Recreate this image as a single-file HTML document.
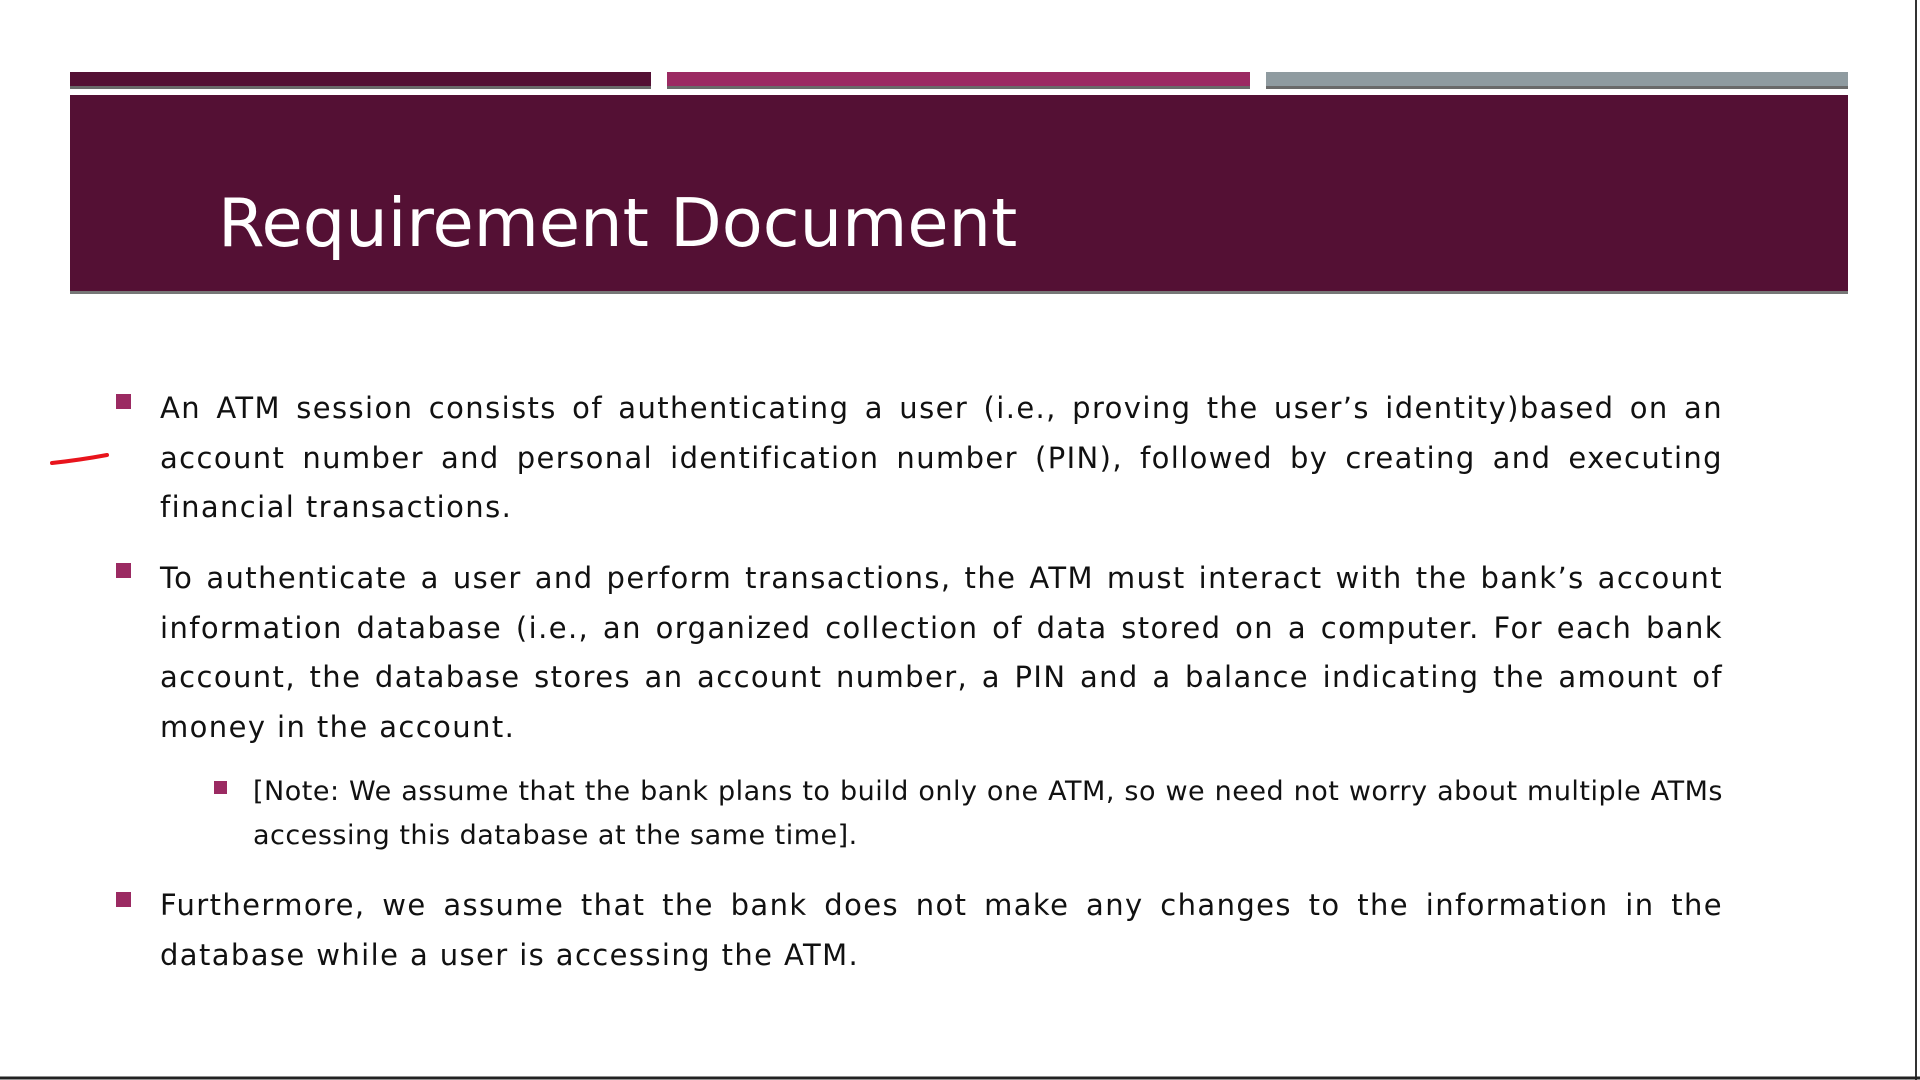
<!DOCTYPE html>
<html><head><meta charset="utf-8"><style>
html,body{margin:0;padding:0;width:1920px;height:1080px;background:#fff;overflow:hidden;position:relative;font-family:"DejaVu Sans","Liberation Sans",sans-serif;}
.bar{position:absolute;top:72px;height:14px;box-shadow:0 3px 0 #6a6a6a;}
.banner{position:absolute;left:70px;top:95px;width:1778px;height:196px;background:#541034;box-shadow:0 3px 0 #777;}
.title{position:absolute;left:218px;top:178px;color:#fff;font-size:67px;line-height:90px;white-space:nowrap;}
.p{position:absolute;left:160px;width:1563px;font-size:29px;line-height:49.6px;color:#111;letter-spacing:1.4px;}
.p div,.sub div{white-space:nowrap;text-align:justify;text-align-last:justify;}
.p div.l,.sub div.l{text-align-last:left;}
.sub{position:absolute;left:253px;width:1470px;font-size:27px;line-height:44px;color:#111;letter-spacing:0.5px;}
.b{position:absolute;width:15px;height:15px;background:#9b2a62;}
.bs{position:absolute;width:13px;height:13px;background:#9b2a62;}
</style></head><body>
<div class="bar" style="left:70px;width:581px;background:#541034"></div>
<div class="bar" style="left:667px;width:583px;background:#9b2a62"></div>
<div class="bar" style="left:1266px;width:582px;background:#8f9ba0"></div>
<div class="banner"></div>
<div class="title">Requirement Document</div>

<div class="b" style="left:116px;top:394px"></div>
<div class="p" style="top:384px"><div>An ATM session consists of authenticating a user (i.e., proving the user’s identity)based on an</div><div>account number and personal identification number (PIN), followed by creating and executing</div><div class="l">financial transactions.</div></div>

<div class="b" style="left:116px;top:563px"></div>
<div class="p" style="top:554px"><div>To authenticate a user and perform transactions, the ATM must interact with the bank’s account</div><div>information database (i.e., an organized collection of data stored on a computer. For each bank</div><div>account, the database stores an account number, a PIN and a balance indicating the amount of</div><div class="l">money in the account.</div></div>

<div class="bs" style="left:214px;top:781px"></div>
<div class="sub" style="top:770px"><div>[Note: We assume that the bank plans to build only one ATM, so we need not worry about multiple ATMs</div><div class="l">accessing this database at the same time].</div></div>

<div class="b" style="left:116px;top:892px"></div>
<div class="p" style="top:881px"><div>Furthermore, we assume that the bank does not make any changes to the information in the</div><div class="l">database while a user is accessing the ATM.</div></div>

<svg style="position:absolute;left:0;top:0" width="1920" height="1080">
<path d="M52 463 Q80 460 107 455" stroke="#e8141c" stroke-width="4" fill="none" stroke-linecap="round"/>
<line x1="1916" y1="0" x2="1916" y2="1080" stroke="#333" stroke-width="2"/>
<line x1="0" y1="1078" x2="1920" y2="1078" stroke="#222" stroke-width="3"/>
</svg>
</body></html>
